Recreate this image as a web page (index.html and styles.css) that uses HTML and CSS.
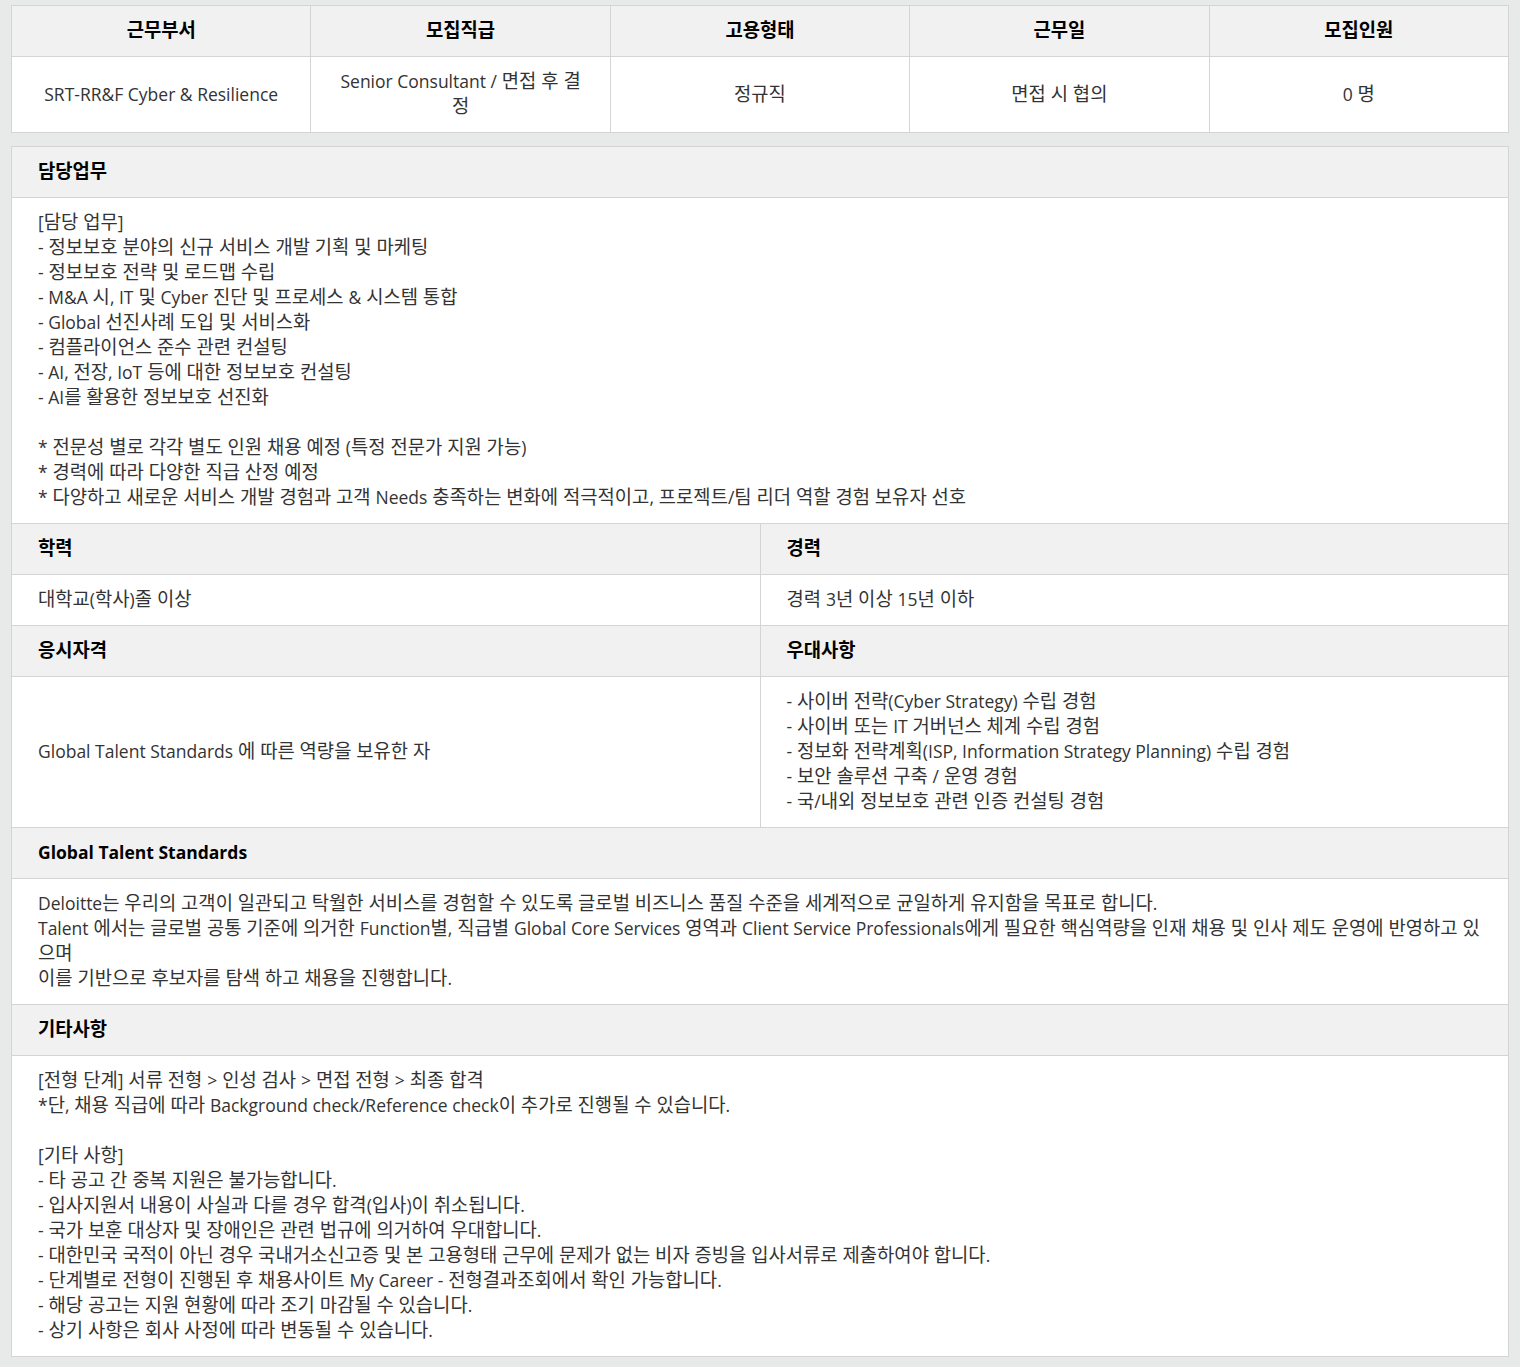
FILE: index.html
```html
<!DOCTYPE html>
<html lang="ko">
<head>
    <meta charset="UTF-8">
    <meta name="viewport" content="width=device-width, initial-scale=1.0">
    <title>채용공고 상세</title>
    <link rel="stylesheet" href="styles.css">
</head>
<body>
    <div class="wrap">
        <!-- 모집 요약 -->
        <table class="summary">
            <tr>
                <th>근무부서</th>
                <th>모집직급</th>
                <th>고용형태</th>
                <th>근무일</th>
                <th>모집인원</th>
            </tr>
            <tr>
                <td><span class="en">SRT-RR&amp;F Cyber &amp; Resilience</span></td>
                <td><span class="en">Senior Consultant /</span> 면접 후 결정</td>
                <td>정규직</td>
                <td>면접 시 협의</td>
                <td><span class="en">0</span> 명</td>
            </tr>
        </table>

        <!-- 상세 내용 -->
        <table class="detail">
            <tr>
                <th colspan="2">담당업무</th>
            </tr>
            <tr>
                <td colspan="2">
                    <span class="en">[</span>담당 업무<span class="en">]</span><br>
                    <span class="en">-</span> 정보보호 분야의 신규 서비스 개발 기획 및 마케팅<br>
                    <span class="en">-</span> 정보보호 전략 및 로드맵 수립<br>
                    <span class="en">- M&amp;A</span> 시<span class="en">, IT</span> 및 <span class="en">Cyber</span> 진단 및 프로세스 <span class="en">&amp;</span> 시스템 통합<br>
                    <span class="en">- Global</span> 선진사례 도입 및 서비스화<br>
                    <span class="en">-</span> 컴플라이언스 준수 관련 컨설팅<br>
                    <span class="en">- AI,</span> 전장<span class="en">, IoT</span> 등에 대한 정보보호 컨설팅<br>
                    <span class="en">- AI</span>를 활용한 정보보호 선진화<br>
                    <br>
                    <span class="en">*</span> 전문성 별로 각각 별도 인원 채용 예정 <span class="en">(</span>특정 전문가 지원 가능<span class="en">)</span><br>
                    <span class="en">*</span> 경력에 따라 다양한 직급 산정 예정<br>
                    <span class="en">*</span> 다양하고 새로운 서비스 개발 경험과 고객 <span class="en">Needs</span> 충족하는 변화에 적극적이고<span class="en">,</span> 프로젝트<span class="en">/</span>팀 리더 역할 경험 보유자 선호
                </td>
            </tr>
            <tr>
                <th>학력</th>
                <th>경력</th>
            </tr>
            <tr>
                <td>대학교<span class="en">(</span>학사<span class="en">)</span>졸 이상</td>
                <td>경력 <span class="en">3</span>년 이상 <span class="en">15</span>년 이하</td>
            </tr>
            <tr>
                <th>응시자격</th>
                <th>우대사항</th>
            </tr>
            <tr>
                <td class="middle"><span class="en">Global Talent Standards</span> 에 따른 역량을 보유한 자</td>
                <td>
                    <span class="en">-</span> 사이버 전략<span class="en">(Cyber Strategy)</span> 수립 경험<br>
                    <span class="en">-</span> 사이버 또는 <span class="en">IT</span> 거버넌스 체계 수립 경험<br>
                    <span class="en">-</span> 정보화 전략계획<span class="en">(ISP, Information Strategy Planning)</span> 수립 경험<br>
                    <span class="en">-</span> 보안 솔루션 구축 <span class="en">/</span> 운영 경험<br>
                    <span class="en">-</span> 국<span class="en">/</span>내외 정보보호 관련 인증 컨설팅 경험
                </td>
            </tr>
            <tr>
                <th colspan="2"><span class="en">Global Talent Standards</span></th>
            </tr>
            <tr>
                <td colspan="2">
                    <span class="en">Deloitte</span>는 우리의 고객이 일관되고 탁월한 서비스를 경험할 수 있도록 글로벌 비즈니스 품질 수준을 세계적으로 균일하게 유지함을 목표로 합니다<span class="en">.</span><br>
                    <span class="en">Talent</span> 에서는 글로벌 공통 기준에 의거한 <span class="en">Function</span>별<span class="en">,</span> 직급별 <span class="en">Global Core Services</span> 영역과 <span class="en">Client Service Professionals</span>에게 필요한 핵심역량을 인재 채용 및 인사 제도 운영에 반영하고 있으며<br>
                    이를 기반으로 후보자를 탐색 하고 채용을 진행합니다<span class="en">.</span>
                </td>
            </tr>
            <tr>
                <th colspan="2">기타사항</th>
            </tr>
            <tr>
                <td colspan="2">
                    <span class="en">[</span>전형 단계<span class="en">]</span> 서류 전형 <span class="en">&gt;</span> 인성 검사 <span class="en">&gt;</span> 면접 전형 <span class="en">&gt;</span> 최종 합격<br>
                    <span class="en">*</span>단<span class="en">,</span> 채용 직급에 따라 <span class="en">Background check/Reference check</span>이 추가로 진행될 수 있습니다<span class="en">.</span><br>
                    <br>
                    <span class="en">[</span>기타 사항<span class="en">]</span><br>
                    <span class="en">-</span> 타 공고 간 중복 지원은 불가능합니다<span class="en">.</span><br>
                    <span class="en">-</span> 입사지원서 내용이 사실과 다를 경우 합격<span class="en">(</span>입사<span class="en">)</span>이 취소됩니다<span class="en">.</span><br>
                    <span class="en">-</span> 국가 보훈 대상자 및 장애인은 관련 법규에 의거하여 우대합니다<span class="en">.</span><br>
                    <span class="en">-</span> 대한민국 국적이 아닌 경우 국내거소신고증 및 본 고용형태 근무에 문제가 없는 비자 증빙을 입사서류로 제출하여야 합니다<span class="en">.</span><br>
                    <span class="en">-</span> 단계별로 전형이 진행된 후 채용사이트 <span class="en">My Career -</span> 전형결과조회에서 확인 가능합니다<span class="en">.</span><br>
                    <span class="en">-</span> 해당 공고는 지원 현황에 따라 조기 마감될 수 있습니다<span class="en">.</span><br>
                    <span class="en">-</span> 상기 사항은 회사 사정에 따라 변동될 수 있습니다<span class="en">.</span>
                </td>
            </tr>
        </table>
    </div>
</body>
</html>
```

FILE: styles.css
```css
html, body {
    margin: 0;
    padding: 0;
}

body {
    background: #e8e9e9;
    font-family: "Open Sans", "Noto Sans CJK KR", sans-serif;
    font-size: 18.8px; /* 한글 글자폭 맞춤 */
    line-height: 25px;
    color: #333;
}

/* 영문/숫자는 조금 작게 */
.en {
    font-size: 17.5px;
    line-height: 1;
}

.wrap {
    padding: 5px 11px 10px;
}

table {
    width: 100%;
    border-collapse: collapse;
    table-layout: fixed;
    background: #fff;
}

th, td {
    border: 1px solid #d4d4d4;
    padding: 12px 26px 13px;
    text-align: left;
    vertical-align: top;
}

th {
    background: #f1f1f1;
    color: #000;
    font-weight: bold;
}

/* 상단 요약 표 */
.summary {
    margin-bottom: 13px;
}

.summary th, .summary td {
    text-align: center;
    vertical-align: middle;
}

.detail td {
    padding-right: 20px;
}

.detail td.middle {
    vertical-align: middle;
}
```
